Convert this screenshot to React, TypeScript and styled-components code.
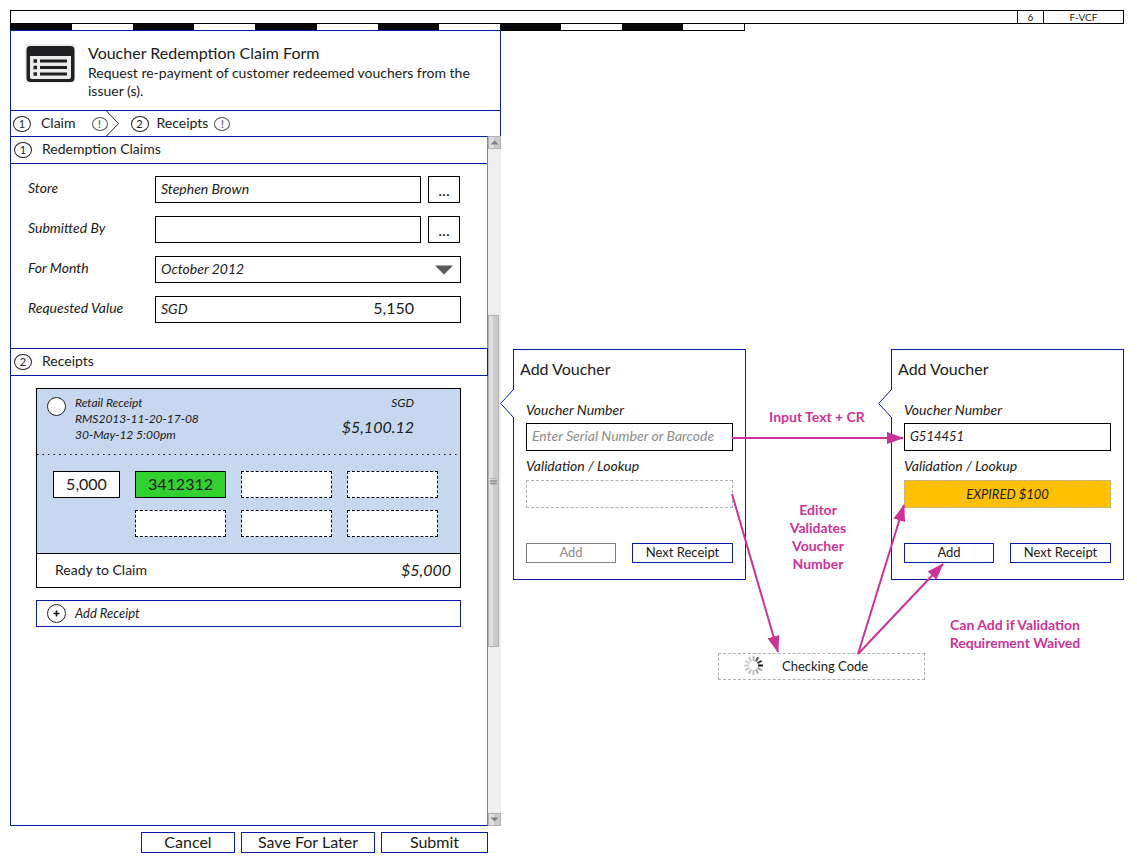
import React from "react";
import styled, { createGlobalStyle } from "styled-components";

const BLUE = "#0a1aaa";
const INK = "#1a1a1a";
const PINK = "#cc3399";

const GlobalStyle = createGlobalStyle`
  *, *::before, *::after { box-sizing: border-box; }
  body { margin: 0; background: #fff; }
  body, button, input, select {
    font-family: Lato, "Liberation Sans", sans-serif;
    color: ${INK};
  }
  button, input, select { margin: 0; border-radius: 0; }
  p, h1, h2 { margin: 0; font-weight: 400; }
`;

const Page = styled.div`
  display: flex;
  flex-direction: column;
  min-height: 100vh;
  padding: 10px 13px 11px 10px;
`;

const TitleBar = styled.header`
  display: flex;
  justify-content: flex-end;
  border: 1px solid #000;
  font-size: 10px;
  line-height: 12px;
  text-align: center;
`;

const TitleCell = styled.span<{ $width: number }>`
  width: ${(p) => p.$width}px;
  border-left: 1px solid #000;
`;

const Ruler = styled.div`
  display: flex;
  width: 66%;
  height: 7px;
  border: solid #000;
  border-width: 0 1px 1px;
`;

const RulerMark = styled.span<{ $dark: boolean }>`
  flex: 1;
  background: ${(p) => (p.$dark ? "#0a0a0a" : "#fff")};
`;

const Workspace = styled.main`
  display: flex;
  flex: 1;
  margin-top: -1px;
`;

const Form = styled.form`
  display: flex;
  flex-direction: column;
  flex: 0 0 491px;
`;

const FormHead = styled.div`
  display: flex;
  gap: 13px;
  padding: 13px 24px 10px 14px;
  border: 1px solid ${BLUE};
`;

const FormIcon = styled.svg`
  flex: none;
  width: 50px;
  height: 39px;
`;

const FormTitle = styled.h1`
  font-size: 16px;
  line-height: 18px;
`;

const FormSubtitle = styled.p`
  padding-top: 2px;
  font-size: 14px;
  line-height: 18px;
`;

const Steps = styled.nav`
  display: flex;
  align-items: center;
  height: 25px;
  padding-left: 2px;
  border: solid ${BLUE};
  border-width: 0 1px;
`;

const Step = styled.button<{ $gap: number }>`
  display: flex;
  align-items: center;
  gap: ${(p) => p.$gap}px;
  padding: 0;
  border: 0;
  background: none;
  font-size: 14px;
  line-height: 16px;
`;

const StepLabel = styled.span`
  padding: 0 0 1px 2px;
`;

const Chevron = styled.svg`
  width: 13px;
  height: 25px;
  margin: 0 12px 0 -2px;
`;

const Badge = styled.span<{ $alert?: boolean }>`
  flex: none;
  width: ${(p) => (p.$alert ? 16 : 18)}px;
  height: ${(p) => (p.$alert ? 14 : 16)}px;
  border: 1px solid ${(p) => (p.$alert ? "#555" : "#222")};
  border-radius: 50%;
  color: ${(p) => (p.$alert ? "#444" : INK)};
  font-size: 11px;
  line-height: ${(p) => (p.$alert ? 12 : 14)}px;
  text-align: center;
`;

const AlertSlot = styled.span`
  display: flex;
  padding-left: 8px;
`;

const Scroller = styled.div`
  display: flex;
  flex: 1;
`;

const FormBody = styled.div`
  flex: 1;
  border: 1px solid ${BLUE};
  border-right-color: #7b84cc;
`;

const SectionBar = styled.div<{ $ruled?: boolean }>`
  display: flex;
  align-items: center;
  gap: 10px;
  height: ${(p) => (p.$ruled ? 28 : 27)}px;
  padding-left: 3px;
  border: solid ${BLUE};
  border-width: ${(p) => (p.$ruled ? "1px 1px 1px 0" : "0 0 1px")};
  margin-right: ${(p) => (p.$ruled ? -1 : 0)}px;
`;

const SectionTitle = styled.h2`
  padding-bottom: 2px;
  font-size: 14px;
  line-height: 16px;
`;

const Fields = styled.div`
  display: grid;
  grid-template-columns: 127px 1fr;
  row-gap: 13px;
  align-items: center;
  padding: 12px 26px 25px 17px;
`;

const FieldLabel = styled.label`
  font-size: 14px;
  line-height: 16px;
  font-style: italic;
`;

const FormLabel = styled(FieldLabel)`
  padding-bottom: 3px;
`;

const FieldRow = styled.div`
  display: flex;
  gap: 7px;
  padding-right: 1px;
`;

const TextBox = styled.input`
  flex: 1;
  width: 100%;
  min-width: 0;
  height: 27px;
  padding: 0 5px 2px;
  border: 1px solid #000;
  background: #fff;
  font-size: 14px;
  font-style: italic;
`;

const LookupButton = styled.button`
  width: 32px;
  height: 27px;
  padding: 0;
  border: 1px solid #000;
  background: #fff;
  font-size: 16px;
  line-height: 24px;
`;

const SelectWrap = styled.div`
  position: relative;
`;

const Select = styled.select`
  display: block;
  width: 100%;
  height: 27px;
  padding: 0 5px 2px;
  border: 1px solid #000;
  background: #fff;
  appearance: none;
  font-size: 14px;
  font-style: italic;
`;

const SelectArrow = styled.svg`
  position: absolute;
  right: 8px;
  top: 9px;
  width: 18px;
  height: 10px;
  pointer-events: none;
`;

const AmountBox = styled.div`
  display: flex;
  align-items: center;
  height: 27px;
  padding: 0 46px 3px 5px;
  border: 1px solid #000;
  font-size: 14px;
  font-style: italic;
`;

const AmountInput = styled.input`
  flex: 1;
  min-width: 0;
  height: 22px;
  padding: 0 0 2px;
  border: 0;
  background: none;
  font-size: 16px;
  text-align: right;
`;

const Receipts = styled.div`
  display: flex;
  flex-direction: column;
  gap: 12px;
  padding: 12px 26px 12px 25px;
`;

const ReceiptCard = styled.article`
  border: 1px solid #000;
`;

const ReceiptTop = styled.div`
  display: flex;
  height: 65px;
  padding: 6px 46px 0 10px;
  background: #c6d7ef;
  font-size: 12px;
  line-height: 16px;
  font-style: italic;
`;

const Radio = styled.input`
  appearance: none;
  width: 19px;
  height: 19px;
  margin: 2px 9px 0 0;
  border: 1px solid #222;
  border-radius: 50%;
  background: #fff;
`;

const ReceiptInfo = styled.div`
  flex: 1;
`;

const ReceiptTotal = styled.div`
  text-align: right;
`;

const BigAmount = styled.p`
  padding-top: 6px;
  font-size: 16px;
  line-height: 20px;
  font-style: italic;
`;

const Perforation = styled.svg`
  display: block;
  width: 100%;
  height: 1px;
  background: #c6d7ef;
`;

const VoucherGrid = styled.div`
  display: grid;
  grid-template-columns: 67px repeat(3, 91px);
  gap: 12px 15px;
  padding: 16px 16px 16px;
  background: #c6d7ef;
  border-bottom: 1px solid #000;
`;

const VoucherCell = styled.input<{ $kind: "total" | "valid" | "empty"; $first?: boolean }>`
  grid-column-start: ${(p) => (p.$first ? 2 : "auto")};
  width: ${(p) => (p.$kind === "total" ? 67 : 91)}px;
  height: 27px;
  padding: 0 0 3px;
  border: 1px ${(p) => (p.$kind === "empty" ? "dashed" : "solid")} #000;
  background: ${(p) => (p.$kind === "valid" ? "#33d130" : "#fff")};
  font-size: 16px;
  text-align: center;
`;

const ReceiptFoot = styled.div`
  display: flex;
  align-items: center;
  justify-content: space-between;
  height: 33px;
  padding: 0 9px 2px 18px;
  font-size: 14px;
`;

const FootAmount = styled.em`
  font-size: 16px;
`;

const AddReceipt = styled.button`
  display: flex;
  align-items: center;
  gap: 9px;
  height: 27px;
  padding: 0 10px;
  border: 1px solid ${BLUE};
  background: #fff;
  font-size: 13px;
  line-height: 16px;
  font-style: italic;
`;

const AddReceiptLabel = styled.span`
  padding-bottom: 2px;
`;

const PlusIcon = styled.svg`
  width: 19px;
  height: 19px;
`;

const ScrollTrack = styled.div`
  display: flex;
  flex-direction: column;
  justify-content: space-between;
  width: 13px;
  background: #eeeeee;
`;

const ScrollArrow = styled.svg`
  width: 13px;
  height: 13px;
`;

const ScrollThumb = styled.div`
  display: flex;
  align-items: center;
  justify-content: center;
  width: 11px;
  height: 48%;
  border: 1px solid #b0b0b0;
  background: linear-gradient(90deg, #e0e0e0 45%, #cbcbcb 45%);
`;

const Actions = styled.div`
  display: flex;
  justify-content: flex-end;
  gap: 6px;
  padding: 6px 13px 0 0;
`;

const ActionButton = styled.button<{ $width: number }>`
  width: ${(p) => p.$width}px;
  height: 21px;
  padding: 0 0 2px;
  border: 1px solid ${BLUE};
  background: #fff;
  font-size: 16px;
  line-height: 17px;
`;

const Canvas = styled.section`
  position: relative;
  flex: 1;
  min-width: 623px;
`;

const Node = styled.div<{ $x: number; $y: number; $w: number }>`
  position: absolute;
  left: ${(p) => p.$x}px;
  top: ${(p) => p.$y}px;
  width: ${(p) => p.$w}px;
`;

const VoucherPanel = styled(Node)`
  display: flex;
  flex-direction: column;
  padding: 9px 12px 16px;
  border: 1px solid ${BLUE};
`;

const Pointer = styled.svg`
  position: absolute;
  left: -14px;
  top: 39px;
  width: 15px;
  height: 29px;
`;

const PanelTitle = styled.h2`
  margin: 0 0 23px -6px;
  font-size: 16px;
  line-height: 20px;
`;

const PanelField = styled.div<{ $gap: number }>`
  display: flex;
  flex-direction: column;
  gap: ${(p) => p.$gap}px;
  margin-bottom: 7px;
`;

const PanelInput = styled(TextBox)`
  flex: none;
  height: 28px;
  font-size: 13px;
  &::placeholder { color: #8c8c8c; opacity: 1; font-size: 14px; }
`;

const Result = styled.output<{ $expired: boolean }>`
  height: 28px;
  border: 1px dashed #b3b3b3;
  background: ${(p) => (p.$expired ? "#ffc000" : "#fff")};
  font-size: 13px;
  line-height: 26px;
  font-style: italic;
  text-align: center;
`;

const PanelActions = styled.div`
  display: flex;
  justify-content: space-between;
  padding-top: 28px;
`;

const PanelButton = styled.button<{ $width: number }>`
  width: ${(p) => p.$width}px;
  height: 20px;
  padding: 0 0 2px;
  border: 1px solid ${BLUE};
  background: #fff;
  font-size: 13px;
  line-height: 16px;
  &:disabled { border-color: #7f7f7f; color: #8c8c8c; }
`;

const Note = styled(Node)`
  color: ${PINK};
  font-size: 14px;
  line-height: 18px;
  font-weight: 700;
  text-align: center;
`;

const Checking = styled(Node)`
  display: flex;
  align-items: center;
  gap: 18px;
  height: 27px;
  padding: 0 0 2px 24px;
  border: 1px dashed #b3b3b3;
  font-size: 13px;
`;

const Spinner = styled.svg`
  width: 21px;
  height: 21px;
`;

const Connectors = styled.svg`
  position: absolute;
  left: 0;
  top: 0;
  width: 623px;
  height: 660px;
  pointer-events: none;
`;

function Arrow({ x1, y1, x2, y2 }: { x1: number; y1: number; x2: number; y2: number }) {
  return <line x1={x1} y1={y1} x2={x2} y2={y2} stroke={PINK} strokeWidth="2" markerEnd="url(#head)" />;
}

function ScrollEnd({ up }: { up?: boolean }) {
  return (
    <ScrollArrow viewBox="0 0 13 13" aria-hidden="true">
      <rect x="0.5" y="0.5" width="12" height="12" fill="#dedede" stroke="#b0b0b0" />
      <rect x="6" y="1" width="6" height="11" fill="#cbcbcb" />
      <path d={up ? "M2.5 8.5 6.5 4.5 10.5 8.5Z" : "M2.5 4.5 6.5 8.5 10.5 4.5Z"} fill="#808080" />
    </ScrollArrow>
  );
}

type PanelProps = { id: string; x: number; value?: string; result?: string; canAdd: boolean };

function AddVoucher({ id, x, value, result, canAdd }: PanelProps) {
  return (
    <VoucherPanel $x={x} $y={319} $w={233}>
      <Pointer viewBox="0 0 15 29" aria-hidden="true">
        <path d="M13.5 1V28" stroke="#fff" strokeWidth="1" />
        <path d="M13.5 0.5 0.7 14.5 13.5 28.5" fill="none" stroke={BLUE} />
      </Pointer>
      <PanelTitle>Add Voucher</PanelTitle>
      <PanelField $gap={5}>
        <FieldLabel htmlFor={`${id}-number`}>Voucher Number</FieldLabel>
        <PanelInput id={`${id}-number`} defaultValue={value} placeholder="Enter Serial Number or Barcode" />
      </PanelField>
      <PanelField $gap={6}>
        <FieldLabel htmlFor={`${id}-result`}>Validation / Lookup</FieldLabel>
        <Result id={`${id}-result`} $expired={!!result}>{result}</Result>
      </PanelField>
      <PanelActions>
        <PanelButton type="button" $width={90} disabled={!canAdd}>Add</PanelButton>
        <PanelButton type="button" $width={101}>Next Receipt</PanelButton>
      </PanelActions>
    </VoucherPanel>
  );
}

const SPOKES = ["#111", "#333", "#555", "#bbb", "#ccc", "#ccc", "#ccc", "#c4c4c4", "#c0c0c0", "#bbb", "#aaa", "#999"];

export default function App() {
  return (
    <Page>
      <GlobalStyle />
      <TitleBar>
        <TitleCell $width={26}>6</TitleCell>
        <TitleCell $width={80}>F-VCF</TitleCell>
      </TitleBar>
      <Ruler>
        {Array.from({ length: 12 }, (_, i) => (
          <RulerMark key={i} $dark={i % 2 === 0} />
        ))}
      </Ruler>
      <Workspace>
        <Form onSubmit={(e) => e.preventDefault()}>
          <FormHead>
            <FormIcon viewBox="0 0 50 39" aria-hidden="true">
              <rect width="50" height="39" fill="#ececec" />
              <rect x="1.5" y="2" width="48" height="36" rx="4" fill="#202022" />
              <path d="M5 12H46V33Q46 35 44 35H7Q5 35 5 33Z" fill="#ececec" />
              <path d="M15 17H42M15 23.5H42M15 30H42" stroke="#202022" strokeWidth="3" />
              <path d="M8.5 17H12M8.5 23.5H12M8.5 30H12" stroke="#202022" strokeWidth="3.4" />
            </FormIcon>
            <div>
              <FormTitle>Voucher Redemption Claim Form</FormTitle>
              <FormSubtitle>Request re-payment of customer redeemed vouchers from the issuer (s).</FormSubtitle>
            </div>
          </FormHead>
          <Steps aria-label="Steps">
            <Step type="button" $gap={8}>
              <Badge>1</Badge>
              <StepLabel>Claim</StepLabel>
              <AlertSlot>
                <Badge $alert>!</Badge>
              </AlertSlot>
            </Step>
            <Chevron viewBox="0 0 13 25" aria-hidden="true">
              <path d="M0.5 0 12.5 12.5 0.5 25" fill="none" stroke="#222" />
            </Chevron>
            <Step type="button" $gap={6}>
              <Badge>2</Badge>
              <StepLabel>Receipts</StepLabel>
              <Badge $alert>!</Badge>
            </Step>
          </Steps>
          <Scroller>
            <FormBody>
              <SectionBar>
                <Badge>1</Badge>
                <SectionTitle>Redemption Claims</SectionTitle>
              </SectionBar>
              <Fields>
                <FormLabel htmlFor="store">Store</FormLabel>
                <FieldRow>
                  <TextBox id="store" defaultValue="Stephen Brown" />
                  <LookupButton type="button" aria-label="Find store">...</LookupButton>
                </FieldRow>
                <FormLabel htmlFor="submitter">Submitted By</FormLabel>
                <FieldRow>
                  <TextBox id="submitter" />
                  <LookupButton type="button" aria-label="Find submitter">...</LookupButton>
                </FieldRow>
                <FormLabel htmlFor="month">For Month</FormLabel>
                <SelectWrap>
                  <Select id="month">
                    <option>October 2012</option>
                  </Select>
                  <SelectArrow viewBox="0 0 18 10" aria-hidden="true">
                    <path d="M0 0.5H18L9 9.5Z" fill="#595959" />
                  </SelectArrow>
                </SelectWrap>
                <FormLabel htmlFor="requested">Requested Value</FormLabel>
                <AmountBox>
                  <span>SGD</span>
                  <AmountInput id="requested" defaultValue="5,150" />
                </AmountBox>
              </Fields>
              <SectionBar $ruled>
                <Badge>2</Badge>
                <SectionTitle>Receipts</SectionTitle>
              </SectionBar>
              <Receipts>
                <ReceiptCard>
                  <ReceiptTop>
                    <Radio type="radio" name="receipt" aria-label="Retail Receipt" />
                    <ReceiptInfo>
                      <p>Retail Receipt</p>
                      <p>RMS2013-11-20-17-08</p>
                      <p>30-May-12 5:00pm</p>
                    </ReceiptInfo>
                    <ReceiptTotal>
                      <p>SGD</p>
                      <BigAmount>$5,100.12</BigAmount>
                    </ReceiptTotal>
                  </ReceiptTop>
                  <Perforation aria-hidden="true">
                    <line x1="0" y1="0.5" x2="100%" y2="0.5" stroke="#000" strokeDasharray="1.5 4" />
                  </Perforation>
                  <VoucherGrid>
                    <VoucherCell $kind="total" aria-label="Voucher total" defaultValue="5,000" />
                    <VoucherCell $kind="valid" aria-label="Voucher 1" defaultValue="3412312" />
                    <VoucherCell $kind="empty" aria-label="Voucher 2" />
                    <VoucherCell $kind="empty" aria-label="Voucher 3" />
                    <VoucherCell $kind="empty" $first aria-label="Voucher 4" />
                    <VoucherCell $kind="empty" aria-label="Voucher 5" />
                    <VoucherCell $kind="empty" aria-label="Voucher 6" />
                  </VoucherGrid>
                  <ReceiptFoot>
                    <span>Ready to Claim</span>
                    <FootAmount>$5,000</FootAmount>
                  </ReceiptFoot>
                </ReceiptCard>
                <AddReceipt type="button">
                  <PlusIcon viewBox="0 0 19 19" aria-hidden="true">
                    <circle cx="9.5" cy="9.5" r="9" fill="#fff" stroke="#222" />
                    <path d="M6.5 9.5H12.5M9.5 6.5V12.5" stroke="#111" strokeWidth="1.6" />
                  </PlusIcon>
                  <AddReceiptLabel>Add Receipt</AddReceiptLabel>
                </AddReceipt>
              </Receipts>
            </FormBody>
            <ScrollTrack aria-hidden="true">
              <ScrollEnd up />
              <ScrollThumb>
                <svg width="7" height="8" viewBox="0 0 7 8">
                  <path d="M0 1.5H7" stroke="#b0b0b0" />
                  <path d="M0 4H7M0 6.5H7" stroke="#8c8c8c" strokeWidth="1.5" />
                </svg>
              </ScrollThumb>
              <ScrollEnd />
            </ScrollTrack>
          </Scroller>
          <Actions>
            <ActionButton type="button" $width={94}>Cancel</ActionButton>
            <ActionButton type="button" $width={134}>Save For Later</ActionButton>
            <ActionButton type="submit" $width={107}>Submit</ActionButton>
          </Actions>
        </Form>
        <Canvas>
          <AddVoucher id="blank" x={12} canAdd={false} />
          <AddVoucher id="filled" x={390} value="G514451" result="EXPIRED $100" canAdd />
          <Note $x={256} $y={378} $w={120}>Input Text + CR</Note>
          <Note $x={277} $y={471} $w={80}>Editor Validates Voucher Number</Note>
          <Note $x={439} $y={586} $w={150}>Can Add if Validation Requirement Waived</Note>
          <Checking $x={217} $y={623} $w={207}>
            <Spinner viewBox="0 0 21 21" aria-hidden="true">
              {SPOKES.map((colour, i) => (
                <line
                  key={i}
                  x1="15"
                  y1="10.5"
                  x2="20"
                  y2="10.5"
                  stroke={colour}
                  strokeWidth="2"
                  transform={`rotate(${-i * 30} 10.5 10.5)`}
                />
              ))}
            </Spinner>
            <span>Checking Code</span>
          </Checking>
          <Connectors viewBox="0 0 623 660" aria-hidden="true">
            <defs>
              <marker id="head" markerUnits="userSpaceOnUse" markerWidth="17" markerHeight="12" refX="16" refY="6" orient="auto">
                <path d="M0 0 17 6 0 12Z" fill={PINK} />
              </marker>
            </defs>
            <Arrow x1={231} y1={408} x2={402} y2={408} />
            <Arrow x1={231} y1={464} x2={277} y2={622} />
            <Arrow x1={357} y1={624} x2={403} y2={475} />
            <Arrow x1={357} y1={624} x2={442} y2={534} />
          </Connectors>
        </Canvas>
      </Workspace>
    </Page>
  );
}
